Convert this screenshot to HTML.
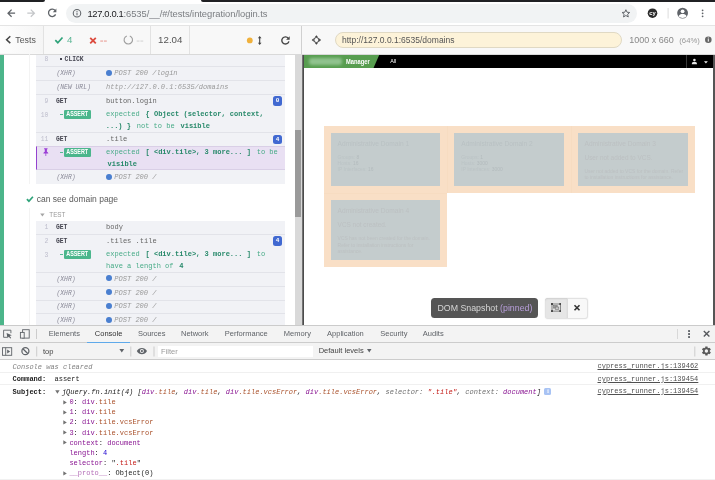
<!DOCTYPE html>
<html>
<head>
<meta charset="utf-8">
<title>Cypress</title>
<style>
*{box-sizing:border-box;margin:0;padding:0}
html,body{width:715px;height:480px;overflow:hidden;background:#fff}
body{position:relative;font-family:"Liberation Sans",sans-serif;color:#333}
.abs{position:absolute}
.mono{font-family:"Liberation Mono",monospace}
/* chrome toolbar */
#chrome{left:0;top:0;width:715px;height:25px;background:#fff}
#tabL{left:0;top:0;width:45px;height:1.600px;background:#202124;border-bottom-right-radius:2px}
#tabR{left:201px;top:0;width:514px;height:1.600px;background:#202124;border-bottom-left-radius:2px}
#omni{left:66px;top:4px;width:571px;height:19px;border-radius:10px;background:#f1f3f4}
#url{left:87.500px;top:8px;font-size:9.400px;line-height:11px;color:#7a7d81;white-space:nowrap;letter-spacing:-0.040px}
#url b{font-weight:normal;color:#202124;letter-spacing:-0.350px}
/* cypress header */
#cyhead{left:0;top:25px;width:715px;height:29.500px;background:#f8f8f8;border-top:1px solid #e4e4e4;border-bottom:1px solid #d9d9d9}
.vdiv{position:absolute;top:26px;height:27.500px;width:1px;background:#e2e2e2}
.ht{position:absolute;font-size:10.5px;line-height:12px;top:34px;white-space:nowrap}
#aurl{left:335px;top:32px;width:287px;height:16px;border-radius:8px;background:#fdf3d9;border:1px solid #e0d9c4}
#aurlt{left:342px;top:35.200px;font-size:8.500px;line-height:10px;color:#555;white-space:nowrap}
/* reporter */
#rep{left:0;top:54.500px;width:295px;height:271px;background:#fff;overflow:hidden}
#strip{left:0;top:54.500px;width:3.500px;height:271px;background:#4cb58a}
#track{left:295px;top:54.500px;width:7px;height:271px;background:#d9d9d9}
#thumb{left:295px;top:130px;width:6px;height:87px;background:#9a9a9a}
#split{left:301.600px;top:54.500px;width:2.500px;height:271px;background:linear-gradient(90deg,#9a9a9a,#555 45%,#444)}
.cmdbox{position:absolute;left:36px;width:249px;background:#f1f2f6}
.row{position:absolute;left:36px;width:249px;border-top:1px solid #e3e4ea}
.t{position:absolute;margin-top:1px;white-space:nowrap;font-family:"Liberation Mono",monospace;font-size:7.040px;line-height:9px}
.num{color:#bcbccb;font-size:6.400px}
.name{color:#454550;font-weight:bold;left:56px;font-size:6.350px}
.ev{color:#8a8a98;font-style:italic;left:56.500px;font-weight:normal;font-size:6.350px}
.msg{color:#666;left:106px}
.evm{color:#999;font-style:italic;left:106px}
.g{color:#47ab87}
.gb{color:#27896a;font-weight:bold;margin:0 1.500px}
.assert{position:absolute;left:64.300px;width:26.700px;height:8.700px;border-radius:1.300px;background:#4bb68c;color:#fff;font-family:"Liberation Sans",sans-serif;font-weight:bold;font-size:6.500px;line-height:8.200px;text-align:center;margin-top:.2px;overflow:hidden}.assert span{display:inline-block;transform:scaleX(.83);transform-origin:50% 50%;margin:0 -3px}
.badge{position:absolute;left:273.100px;width:9px;height:9.500px;border-radius:2.500px;background:#4169d1;color:#fff;font-family:"Liberation Mono",monospace;font-weight:bold;font-size:6px;line-height:9.500px;text-align:center;margin-top:.4px}
.dot{position:absolute;left:105.800px;width:5.800px;height:5.800px;margin-top:-.2px;border-radius:50%;background:#4a7fd0}
/* AUT */
#aut{left:304px;top:54.500px;width:411px;height:271px;background:#fff}
#autbar{left:304px;top:55px;width:409.700px;height:13.400px;background:#000}
#autR{left:713px;top:54.500px;width:2px;height:271px;background:#555}
.peach{position:absolute;background:#f9dfc6}
.tile{position:absolute;background:#c4cccd}
/* devtools */
#dt{left:0;top:325px;width:715px;height:155px;background:#fff;border-top:1px solid #cbcbcb}
#dttabs{left:0;top:326px;width:715px;height:17px;background:#f3f3f3;border-bottom:1px solid #ccc}
#dtbar{left:0;top:343px;width:715px;height:17px;background:#f3f3f3;border-bottom:1px solid #ccc}
.tab{position:absolute;margin-top:.400px;top:329px;font-size:7.5px;line-height:10px;color:#5a5a5a;white-space:nowrap}
.c{position:absolute;margin-top:.800px;white-space:nowrap;font-family:"Liberation Mono",monospace;font-size:7px;line-height:9px;color:#222}
.lnk{position:absolute;margin-top:.800px;right:17px;white-space:nowrap;font-family:"Liberation Mono",monospace;font-size:7px;line-height:9px;color:#505050;text-decoration:underline;text-decoration-thickness:.600px;text-underline-offset:.800px}
.hl{position:absolute;left:0;width:715px;height:1px;background:#f0f0f0}
.pu{color:#881391}.br{color:#a9502a}.rd{color:#c41a16}.bl{color:#1c00cf}.gy{color:#6e6e6e}
</style>
</head>
<body>
<div id="wrap" style="position:absolute;left:0;top:0;width:715px;height:480px;will-change:transform">
<!-- CHROME TOOLBAR -->
<div id="chrome" class="abs"></div>
<div id="tabL" class="abs"></div>
<div id="tabR" class="abs"></div>
<div id="omni" class="abs"></div>
<div id="url" class="abs"><b>127.0.0.1</b>:6535/__/#/tests/integration/login.ts</div>

<svg class="abs" style="left:0;top:0" width="715" height="26" viewBox="0 0 715 26">
 <!-- back -->
 <g fill="none" stroke="#5f6368" stroke-width="1.25" stroke-linecap="butt" stroke-linejoin="miter">
  <path d="M15.1 13.2H8.2M11.6 9.6L8 13.2l3.6 3.6"/>
 </g>
 <!-- forward -->
 <g fill="none" stroke="#c4c6c9" stroke-width="1.25">
  <path d="M27.3 13.2h6.9M30.8 9.6l3.6 3.6-3.6 3.6"/>
 </g>
 <!-- reload -->
 <g fill="none" stroke="#5f6368" stroke-width="1.3">
  <path d="M55.2 10.6A3.7 3.7 0 1 0 55.6 14.4"/>
 </g>
 <path d="M56.4 8.6v3.6h-3.6z" fill="#5f6368"/>
 <!-- info -->
 <circle cx="77" cy="13.2" r="3.750" fill="none" stroke="#5f6368" stroke-width="1.050"/>
 <rect x="76.5" y="12.6" width="1" height="2.7" fill="#5f6368"/>
 <rect x="76.5" y="10.9" width="1" height="1" fill="#5f6368"/>
 <!-- star -->
 <g transform="translate(625.9 13.5) scale(.82) translate(-625.9 -13.5)"><path d="M625.9 8.9l1.35 3.05 3.3.3-2.5 2.2.75 3.25-2.9-1.75-2.9 1.750.75-3.250-2.500-2.200 3.300-.300z" fill="none" stroke="#5f6368" stroke-width="1.200" stroke-linejoin="round"/></g>
 <!-- cy -->
 <circle cx="652.5" cy="13.2" r="4.8" fill="#2b2b2b"/>
 <text x="652.5" y="15.3" font-family="Liberation Sans, sans-serif" font-size="5.800" font-weight="bold" fill="#fff" text-anchor="middle">cy</text>
 <!-- separator -->
 <rect x="667.6" y="8" width="1" height="10.5" fill="#dcdcdc"/>
 <!-- account -->
 <circle cx="682.6" cy="13.1" r="5.4" fill="#5f6368"/>
 <circle cx="682.6" cy="11.3" r="1.9" fill="#fff"/>
 <path d="M678.6 16.2c.6-1.6 2.2-2.2 4-2.2s3.400.6 4 2.2c-1 1.100-2.400 1.700-4 1.700s-3-.6-4-1.700z" fill="#fff"/>
 <!-- dots -->
 <circle cx="702.6" cy="10.300" r="0.9" fill="#5f6368"/>
 <circle cx="702.6" cy="13.300" r="0.9" fill="#5f6368"/>
 <circle cx="702.6" cy="16.300" r="0.9" fill="#5f6368"/>
</svg>


<!-- CYPRESS HEADER -->
<div id="cyhead" class="abs"></div>

<div class="abs" style="left:0;top:26px;width:43px;height:27px;background:linear-gradient(90deg,#fdfdfd,#f5f5f5)"></div>
<div class="vdiv" style="left:43px"></div>
<div class="vdiv" style="left:150px"></div>
<div class="vdiv" style="left:189px"></div>
<div class="vdiv" style="left:301.300px;background:#d0d0d0"></div>
<div class="ht" style="left:15.300px;top:33.600px;font-size:8.8px;color:#555">Tests</div>
<div class="ht" style="left:67px;top:33.700px;font-size:9.700px;color:#5bb594">4</div>
<div class="ht" style="left:158px;top:33.700px;font-size:9.700px;color:#555;letter-spacing:0.05px">12.04</div>
<div class="ht" style="left:629.300px;top:33.5px;font-size:9px;color:#888">1000 x 660</div>
<div class="ht" style="left:679.300px;top:34.5px;font-size:7.700px;color:#999">(64%)</div>
<div id="aurl" class="abs"></div>
<div id="aurlt" class="abs">http://127.0.0.1:6535/domains</div>
<svg class="abs" style="left:0;top:26px" width="715" height="28" viewBox="0 26 715 28">
 <!-- chevron -->
 <path d="M10.300 36.300L6.600 39.700l3.700 3.400" fill="none" stroke="#444" stroke-width="1.5"/>
 <!-- check -->
 <path d="M55.300 40.200l2.500 2.500 4.700-5.200" fill="none" stroke="#2fa37a" stroke-width="1.700"/>
 <!-- x -->
 <path d="M90.200 37.800l5.600 5.600M95.800 37.800l-5.600 5.600" fill="none" stroke="#dc4b3e" stroke-width="1.800"/>
 <rect x="100.300" y="40.600" width="2.800" height="0.900" fill="#e58a80"/>
 <rect x="104" y="40.600" width="2.800" height="0.900" fill="#e58a80"/>
 <!-- pending -->
 <path d="M129.800 35.900A4.200 4.200 0 1 1 126.800 35.900" fill="none" stroke="#9e9e9e" stroke-width="1.100"/>
 <rect x="136.700" y="40.600" width="2.800" height="0.900" fill="#ccc"/>
 <rect x="140.400" y="40.600" width="2.800" height="0.900" fill="#ccc"/>
 <!-- orange dot -->
 <circle cx="249.800" cy="40.400" r="2.900" fill="#f0b13c"/>
 <!-- up down arrow -->
 <path d="M259.700 37.500v6" stroke="#444" stroke-width="1.100" fill="none"/>
 <path d="M257.900 38.300l1.800-2.300 1.800 2.300zM257.900 42.700l1.800 2.300 1.800-2.300z" fill="#444"/>
 <!-- reload -->
 <path d="M288.300 38.300A3.600 3.600 0 1 0 288.900 41.300" fill="none" stroke="#444" stroke-width="1.400"/>
 <path d="M289.700 36.200v3.600h-3.600z" fill="#444"/>
 <!-- crosshair -->
 <g fill="none" stroke="#444" stroke-width="1">
  <circle cx="316.400" cy="40" r="2.500"/>
 </g>
 <path d="M316.400 35.300l1.700 2h-3.400zM316.400 44.700l1.700-2h-3.400zM311.700 40l2-1.700v3.400zM321.100 40l-2-1.700v3.400z" fill="#444"/>
 <!-- info -->
 <circle cx="708.300" cy="39.700" r="3.300" fill="#666"/>
 <rect x="707.800" y="39.100" width="1" height="2.500" fill="#fff"/>
 <rect x="707.800" y="37.500" width="1" height="1" fill="#fff"/>
</svg>


<!-- REPORTER -->
<div id="rep" class="abs"></div>
<div id="strip" class="abs"></div>
<div class="abs" style="left:29px;top:54px;width:1px;height:130px;background:#f3f3f3"></div>
<div class="abs" style="left:29px;top:208px;width:1px;height:117px;background:#f3f3f3"></div>
<div class="cmdbox" style="top:54.500px;height:129.500px"></div>
<div class="t num" style="top:54.4px;left:36px;width:12.300px;text-align:right">8</div>
<div class="t name" style="top:54.4px;"><span style="position:absolute;left:4.400px;top:3px;width:1.800px;height:1.300px;background:#454550"></span><span style="position:absolute;left:8.600px">CLICK</span></div>
<div class="abs" style="left:36px;top:66px;width:249px;height:1px;background:#e2e3e9"></div>
<div class="t ev" style="top:68.2px;">(XHR)</div>
<div class="dot" style="top:70.0px"></div>
<div class="t evm" style="top:68.2px;left:114.300px">POST 200 /login</div>
<div class="abs" style="left:36px;top:80px;width:249px;height:1px;background:#e2e3e9"></div>
<div class="t ev" style="top:81.8px;">(NEW URL)</div>
<div class="t evm" style="top:81.8px;">http://127.0.0.1:6535/domains</div>
<div class="abs" style="left:36px;top:94px;width:249px;height:1px;background:#e2e3e9"></div>
<div class="t num" style="top:96.2px;left:36px;width:12.300px;text-align:right">9</div>
<div class="t name" style="top:96.2px;">GET</div>
<div class="t msg" style="top:96.2px;">button.login</div>
<div class="badge" style="top:96.0px">0</div>
<div class="t num" style="top:109.5px;left:36px;width:12.300px;text-align:right">10</div>
<div class="abs" style="left:60.200px;top:113.8px;width:2.400px;height:1px;background:#58b894"></div>
<div class="assert" style="top:109.7px"><span>ASSERT</span></div>
<div class="t msg g" style="top:109.1px;">expected <b class="gb">{ Object (selector, context,</b></div>
<div class="t msg g" style="top:120.8px;left:104.200px"><b class="gb">...) }</b> not to be <b class="gb">visible</b></div>
<div class="abs" style="left:36px;top:132px;width:249px;height:1px;background:#e2e3e9"></div>
<div class="t num" style="top:134.0px;left:36px;width:12.300px;text-align:right">11</div>
<div class="t name" style="top:134.0px;">GET</div>
<div class="t msg" style="top:134.0px;">.tile</div>
<div class="badge" style="top:134.4px">4</div>
<div class="abs" style="left:36px;top:146px;width:249px;height:24px;background:#e9e0f3;border-left:1.500px solid #9442cf;border-top:1px solid #d9cfe6;border-bottom:1px solid #d9cfe6"></div>
<svg class="abs" style="left:42px;top:148.400px" width="7.700" height="8.200" viewBox="0 0 8 8.500"><path d="M2.200 0.300h3.600v0.900h-0.700v2.600c0.900 0.400 1.500 1 1.500 1.800H4.400v2.600L4 8.400l-0.400-0.200V5.600H1.400c0-0.800 0.600-1.400 1.500-1.800V1.200H2.200z" fill="#9b3fd6"/></svg>
<div class="abs" style="left:60.200px;top:152.0px;width:2.400px;height:1px;background:#58b894"></div>
<div class="assert" style="top:147.9px"><span>ASSERT</span></div>
<div class="t msg g" style="top:147.3px;">expected <b class="gb">[ &lt;div.tile&gt;, 3 more... ]</b> to be</div>
<div class="t msg g" style="top:158.5px;"><b class="gb">visible</b></div>
<div class="t ev" style="top:172.3px;">(XHR)</div>
<div class="dot" style="top:174.1px"></div>
<div class="t evm" style="top:172.3px;left:114.300px">POST 200 /</div>
<svg class="abs" style="left:26px;top:195px" width="8" height="8" viewBox="0 0 8 8"><path d="M0.900 4.200l2 2 4-4.500" fill="none" stroke="#2fa37a" stroke-width="1.700"/></svg>
<div class="abs" style="left:36.800px;top:193.800px;font-size:8.500px;line-height:11px;color:#5a5a5a;white-space:nowrap">can see domain page</div>
<svg class="abs" style="left:40px;top:212.600px" width="5" height="4" viewBox="0 0 5 4"><path d="M0.200 0.500h4.400L2.400 3.400z" fill="#a5a5a5"/></svg>
<div class="abs" style="left:49.300px;top:210.300px;font-size:6.300px;line-height:9px;color:#999;white-space:nowrap">TEST</div>
<div class="cmdbox" style="top:221px;height:104px"></div>
<div class="t num" style="top:222.3px;left:36px;width:12.300px;text-align:right">1</div>
<div class="t name" style="top:222.3px;">GET</div>
<div class="t msg" style="top:222.3px;">body</div>
<div class="abs" style="left:36px;top:234px;width:249px;height:1px;background:#e2e3e9"></div>
<div class="t num" style="top:236.0px;left:36px;width:12.300px;text-align:right">2</div>
<div class="t name" style="top:236.0px;">GET</div>
<div class="t msg" style="top:236.0px;">.tiles .tile</div>
<div class="badge" style="top:236.0px">4</div>
<div class="t num" style="top:249.6px;left:36px;width:12.300px;text-align:right">3</div>
<div class="abs" style="left:60.200px;top:253.9px;width:2.400px;height:1px;background:#58b894"></div>
<div class="assert" style="top:249.8px"><span>ASSERT</span></div>
<div class="t msg g" style="top:249.3px;">expected <b class="gb">[ &lt;div.tile&gt;, 3 more... ]</b> to</div>
<div class="t msg g" style="top:260.9px;">have a length of <b class="gb">4</b></div>
<div class="abs" style="left:36px;top:272px;width:249px;height:1px;background:#e2e3e9"></div>
<div class="t ev" style="top:273.7px;">(XHR)</div>
<div class="dot" style="top:275.5px"></div>
<div class="t evm" style="top:273.7px;left:114.300px">POST 200 /</div>
<div class="abs" style="left:36px;top:286px;width:249px;height:1px;background:#e2e3e9"></div>
<div class="t ev" style="top:287.5px;">(XHR)</div>
<div class="dot" style="top:289.3px"></div>
<div class="t evm" style="top:287.5px;left:114.300px">POST 200 /</div>
<div class="abs" style="left:36px;top:300px;width:249px;height:1px;background:#e2e3e9"></div>
<div class="t ev" style="top:301.3px;">(XHR)</div>
<div class="dot" style="top:303.1px"></div>
<div class="t evm" style="top:301.3px;left:114.300px">POST 200 /</div>
<div class="abs" style="left:36px;top:313px;width:249px;height:1px;background:#e2e3e9"></div>
<div class="t ev" style="top:315.1px;">(XHR)</div>
<div class="dot" style="top:316.9px"></div>
<div class="t evm" style="top:315.1px;left:114.300px">POST 200 /</div>
<div id="track" class="abs"></div>
<div id="thumb" class="abs"></div>
<div id="split" class="abs"></div>

<!-- AUT -->
<div id="aut" class="abs"></div>
<div id="autbar" class="abs"></div>
<div id="autR" class="abs"></div>

<div class="abs" style="left:303.700px;top:55px;width:76px;height:13.400px;background:#579d4f;clip-path:polygon(0 0,75.5px 0,69.600px 100%,0 100%)"></div>
<div class="abs" style="left:309px;top:58px;width:33px;height:7px;background:#a4d0a4;filter:blur(1.600px);opacity:.75;border-radius:3px"></div>
<div class="abs" style="left:346px;top:57.800px;font-size:6.700px;line-height:8px;font-weight:bold;color:#fff;white-space:nowrap;transform:scaleX(.86);transform-origin:0 0">Manager</div>
<div class="abs" style="left:390.300px;top:57.800px;font-size:5.400px;line-height:7px;color:#fff;white-space:nowrap">All</div>
<div class="abs" style="left:685.500px;top:55px;width:1px;height:13px;background:#3a3a3a"></div>
<svg class="abs" style="left:691px;top:57.500px" width="18" height="7" viewBox="0 0 18 7"><circle cx="3.400" cy="2" r="1.300" fill="#e8e8e8"/><path d="M0.800 6.200c0-1.700 1-2.400 2.600-2.400s2.600.7 2.600 2.400z" fill="#e8e8e8"/><path d="M13 3.300h3.800l-1.900 2.200z" fill="#f0f0f0"/></svg>
<!-- peach highlight -->
<div class="peach" style="left:323.500px;top:126.400px;width:371.200px;height:66.800px"></div>
<div class="peach" style="left:323.500px;top:192px;width:123.800px;height:75.300px"></div>
<div class="abs" style="left:447px;top:126px;width:0.600px;height:67px;background:#f7dcc1"></div>
<div class="abs" style="left:570.800px;top:126px;width:0.600px;height:67px;background:#f7dcc1"></div>
<div class="abs" style="left:323.500px;top:192.800px;width:123.800px;height:0.600px;background:#f7dcc1"></div>
<!-- tiles -->
<div class="tile" style="left:330.600px;top:132.800px;width:109.800px;height:53.300px"></div>
<div class="tile" style="left:454.300px;top:132.800px;width:109.900px;height:53.300px"></div>
<div class="tile" style="left:578.100px;top:132.800px;width:109.800px;height:53.300px"></div>
<div class="tile" style="left:330.600px;top:200.300px;width:109.800px;height:59.700px"></div>

<style>
.tt{position:absolute;margin-top:1px;white-space:nowrap;color:#b9c1c3;font-size:6.600px;line-height:8px}
.ts{position:absolute;margin-top:1.500px;white-space:nowrap;color:#bbc3c5;font-size:4.950px;line-height:6.100px}
.ts b{color:#b3bbbd;font-weight:normal}
.te{color:#bcc0c2}
</style>
<div class="tt" style="left:337.600px;top:139.300px">Administrative Domain 1</div>
<div class="ts" style="left:337.600px;top:153.300px">Groups: <b>8</b><br>Hosts: <b>16</b><br>IP Interfaces: <b>16</b></div>
<div class="tt" style="left:461.300px;top:139.300px">Administrative Domain 2</div>
<div class="ts" style="left:461.300px;top:153.300px">Groups: <b>1</b><br>Hosts: <b>3000</b><br>IP Interfaces: <b>3000</b></div>
<div class="tt te" style="left:584.500px;top:139.300px">Administrative Domain 3</div>
<div class="tt te" style="left:584.500px;top:152.600px;font-size:6.450px">User not added to VCS.</div>
<div class="ts te" style="left:584.500px;top:167.200px;line-height:6.500px">User not added to VCS for the domain. Refer<br>to installation instructions for assistance.</div>
<div class="tt te" style="left:337.600px;top:206.300px">Administrative Domain 4</div>
<div class="tt te" style="left:337.600px;top:220px;font-size:6.450px">VCS not created.</div>
<div class="ts te" style="left:337.600px;top:234.500px;line-height:6.500px">VCS has not been created for the domain.<br>Refer to installation instructions for<br>assistance.</div>

<!-- DOM snapshot -->
<div class="abs" style="left:430.800px;top:298.100px;width:107.600px;height:20.200px;border-radius:3.500px;background:#555"></div>
<div class="abs" style="left:437.500px;top:302.200px;font-size:8.800px;line-height:12px;color:#d6d6d6;white-space:nowrap">DOM Snapshot <span style="color:#b99fdc">(pinned)</span></div>
<div class="abs" style="left:544.700px;top:297.600px;width:43px;height:21.400px;border-radius:3px;background:#f8f8f8;border:1px solid #e2e2e2;box-shadow:0 0 1.500px rgba(0,0,0,.12)"></div>
<div class="abs" style="left:545.200px;top:298.100px;width:22.600px;height:20.400px;border-radius:2.500px 0 0 2.500px;background:#e6e6e6;border-right:1px solid #dcdcdc;box-shadow:inset 0 1px 1.500px rgba(0,0,0,.1)"></div>
<svg class="abs" style="left:550.900px;top:303.100px" width="10.300" height="9.100" viewBox="0 0 10.300 9.100"><rect x="1" y="1" width="8.300" height="7.100" fill="none" stroke="#555" stroke-width="0.700"/><g fill="#4a4a4a"><rect x="0" y="0" width="2" height="2"/><rect x="8.300" y="0" width="2" height="2"/><rect x="0" y="7.100" width="2" height="2"/><rect x="8.300" y="7.100" width="2" height="2"/></g><rect x="2.600" y="2.500" width="3.600" height="2.600" fill="#9a9a9a" stroke="#666" stroke-width=".5"/><rect x="4.200" y="4" width="3.600" height="2.600" fill="#c8c8c8" stroke="#666" stroke-width=".5"/></svg>
<svg class="abs" style="left:573.200px;top:304px" width="8" height="8" viewBox="0 0 8 8"><path d="M1.500 1.300l5 5M6.500 1.300l-5 5" stroke="#333" stroke-width="1.600" fill="none"/></svg>


<!-- DEVTOOLS -->
<div id="dt" class="abs"></div>
<div id="dttabs" class="abs"></div>
<div id="dtbar" class="abs"></div>
<div class="tab" style="left:48.7px;color:#5f6368">Elements</div>
<div class="tab" style="left:94.8px;color:#333">Console</div>
<div class="tab" style="left:138px;color:#5f6368">Sources</div>
<div class="tab" style="left:181px;color:#5f6368">Network</div>
<div class="tab" style="left:224.8px;color:#5f6368">Performance</div>
<div class="tab" style="left:283.8px;color:#5f6368">Memory</div>
<div class="tab" style="left:327.1px;color:#5f6368">Application</div>
<div class="tab" style="left:380.3px;color:#5f6368">Security</div>
<div class="tab" style="left:422.8px;color:#5f6368">Audits</div>
<div class="abs" style="left:87px;top:341.500px;width:43.400px;height:1.500px;background:#5ea9ea"></div>
<div class="abs" style="left:36.200px;top:329px;width:1px;height:10px;background:#ccc"></div>
<div class="abs" style="left:676.500px;top:329px;width:1.500px;height:10px;background:#d8d8d8"></div>
<svg class="abs" style="left:0;top:326px" width="715" height="34" viewBox="0 326 715 34">
 <g fill="none" stroke="#5f6368" stroke-width="0.900">
  <path d="M7 337.300H3.600v-7.100h7.300v3"/>
  <rect x="22.600" y="329.700" width="6.600" height="8.400"/>
  <rect x="2.500" y="347.700" width="9.200" height="7.600"/>
  <path d="M5.700 347.700v7.600"/>
  <circle cx="25.400" cy="351.200" r="3.500" stroke-width="1.250"/>
  <path d="M22.900 348.700l5 5" stroke-width="1.250"/>
 </g>
 <rect x="20.400" y="332.400" width="3.800" height="5.700" fill="#f3f3f3" stroke="#5f6368" stroke-width="0.900"/>
 <path d="M6.600 333l5.200 2.300-2.100.7 1.500 1.900-.9.700-1.500-1.900-1.400 1.500z" fill="#5f6368"/>
 <path d="M7.200 349.500l2.900 2-2.900 2z" fill="#5f6368"/>
 <rect x="36.200" y="346.500" width="1" height="10" fill="#ccc"/>
 <rect x="130.300" y="346.500" width="1" height="10" fill="#ccc"/>
 <rect x="153.500" y="346.500" width="1" height="10" fill="#ccc"/>
 <rect x="694.300" y="346.500" width="1" height="10" fill="#ccc"/>
 <path d="M119.400 349h4.800l-2.400 3.600z" fill="#5f6368"/>
 <path d="M367 349.100h4.500l-2.250 3.500z" fill="#5f6368"/>
 <!-- eye -->
 <path d="M136.800 351.100c1.200-2.200 3-3.200 5.100-3.200s3.900 1 5.100 3.200c-1.200 2.200-3 3.200-5.100 3.200s-3.900-1-5.100-3.200z" fill="#5f6368"/>
 <circle cx="141.900" cy="351.100" r="2" fill="#f3f3f3"/>
 <circle cx="141.900" cy="351.100" r="1.100" fill="#5f6368"/>
 <!-- dots / x -->
 <rect x="688.100" y="330.100" width="1.900" height="1.900" rx=".5" fill="#5f6368"/><rect x="688.100" y="333.100" width="1.900" height="1.900" rx=".5" fill="#5f6368"/><rect x="688.100" y="336.100" width="1.900" height="1.900" rx=".5" fill="#5f6368"/>
 <path d="M703.800 331l5.600 5.600M709.400 331l-5.600 5.600" stroke="#55585c" stroke-width="1.350" fill="none"/>
 <!-- gear -->
 <g transform="translate(706.400 351)">
  <g fill="#5a5a5a">
   <rect x="-1.150" y="-4.500" width="2.300" height="9"/>
   <rect x="-1.150" y="-4.500" width="2.300" height="9" transform="rotate(60)"/>
   <rect x="-1.150" y="-4.500" width="2.300" height="9" transform="rotate(120)"/>
   <circle r="3.400"/>
  </g>
  <circle r="1.700" fill="#f3f3f3"/>
 </g>
</svg>
<div class="abs" style="left:158.300px;top:345.700px;width:154.300px;height:11.500px;background:#fff"></div>
<div class="tab" style="left:43px;top:346.400px;color:#444">top</div>
<div class="tab" style="left:161px;top:346.400px;color:#9a9a9a">Filter</div>
<div class="tab" style="left:318.700px;top:346px;color:#444">Default levels</div>
<div class="abs" style="left:0;top:479px;width:715px;height:1px;background:#f1f1f1"></div>
<div class="hl" style="top:372px"></div><div class="hl" style="top:384px"></div>
<div class="c" style="left:12.6px;top:362.0px;font-style:italic;color:#808080">Console was cleared</div>
<div class="lnk" style="left:597.500px;right:auto;top:361.7px">cypress_runner.js:139462</div>
<div class="c" style="left:12.6px;top:373.8px;"><b>Command:</b></div>
<div class="c" style="left:54.5px;top:373.8px;">assert</div>
<div class="lnk" style="left:597.500px;right:auto;top:374.0px">cypress_runner.js:139454</div>
<div class="c" style="left:12.6px;top:387.1px;"><b>Subject:</b></div>
<svg class="abs" style="left:55.1px;top:389.7px" width="5" height="4" viewBox="0 0 5 4"><path d="M0.200 0.300h4.400L2.400 3.800z" fill="#727272"/></svg>
<div class="c" style="left:61.9px;top:387.1px;"><i><span style="color:#222">jQuery.fn.init(4) [</span><span class="pu">div</span><span class="br">.tile</span>, <span class="pu">div</span><span class="br">.tile</span>, <span class="pu">div</span><span class="br">.tile.vcsError</span>, <span class="pu">div</span><span class="br">.tile.vcsError</span>, <span class="gy">selector: </span><span class="rd">".tile"</span>, <span class="gy">context: </span><span class="pu">document</span>]</i></div>
<div class="abs" style="left:544.400px;top:388.300px;width:7px;height:7px;border-radius:1.500px;background:#a8c3f4;color:#fff;font-size:5.500px;line-height:7px;text-align:center;font-weight:bold;font-family:'Liberation Serif',serif">i</div>
<div class="lnk" style="left:597.500px;right:auto;top:386.0px">cypress_runner.js:139454</div>
<svg class="abs" style="left:63.0px;top:399.6px" width="4" height="5" viewBox="0 0 4 5"><path d="M0.300 0.200v4.400L3.800 2.400z" fill="#727272"/></svg>
<div class="c" style="left:69.4px;top:397.4px;"><span class="pu">0</span>: <span class="pu">div</span><span class="br">.tile</span></div>
<svg class="abs" style="left:63.0px;top:409.7px" width="4" height="5" viewBox="0 0 4 5"><path d="M0.300 0.200v4.400L3.800 2.400z" fill="#727272"/></svg>
<div class="c" style="left:69.4px;top:407.5px;"><span class="pu">1</span>: <span class="pu">div</span><span class="br">.tile</span></div>
<svg class="abs" style="left:63.0px;top:419.9px" width="4" height="5" viewBox="0 0 4 5"><path d="M0.300 0.200v4.400L3.800 2.400z" fill="#727272"/></svg>
<div class="c" style="left:69.4px;top:417.7px;"><span class="pu">2</span>: <span class="pu">div</span><span class="br">.tile.vcsError</span></div>
<svg class="abs" style="left:63.0px;top:430.0px" width="4" height="5" viewBox="0 0 4 5"><path d="M0.300 0.200v4.400L3.800 2.400z" fill="#727272"/></svg>
<div class="c" style="left:69.4px;top:427.8px;"><span class="pu">3</span>: <span class="pu">div</span><span class="br">.tile.vcsError</span></div>
<svg class="abs" style="left:63.0px;top:440.2px" width="4" height="5" viewBox="0 0 4 5"><path d="M0.300 0.200v4.400L3.800 2.400z" fill="#727272"/></svg>
<div class="c" style="left:69.4px;top:438.0px;"><span class="pu">context</span>: <span class="pu">document</span></div>
<div class="c" style="left:69.4px;top:448.0px;"><span class="pu">length</span>: <span class="bl">4</span></div>
<div class="c" style="left:69.4px;top:458.2px;"><span class="pu">selector</span>: "<span class="rd">.tile</span>"</div>
<svg class="abs" style="left:63.0px;top:470.7px" width="4" height="5" viewBox="0 0 4 5"><path d="M0.300 0.200v4.400L3.800 2.400z" fill="#727272"/></svg>
<div class="c" style="left:69.4px;top:468.5px;"><span style="color:#b56fb8">__proto__</span>: Object(0)</div>
</div>
</body>
</html>
